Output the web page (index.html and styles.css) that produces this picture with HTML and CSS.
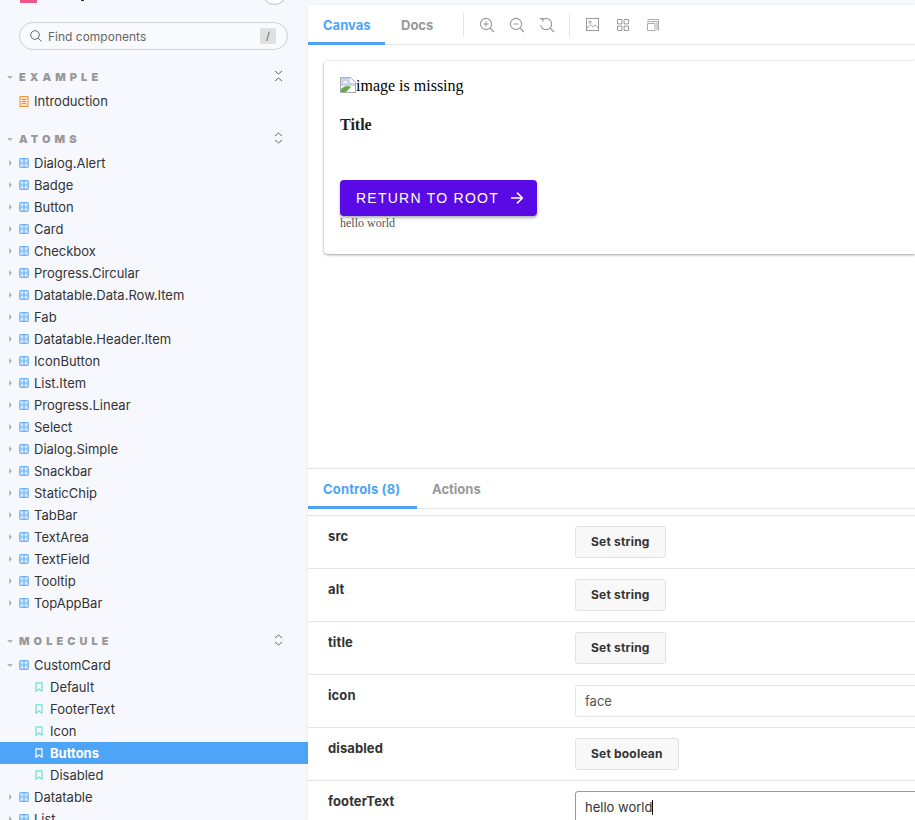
FILE: index.html
```html
<!DOCTYPE html>
<html lang="en">
<head>
<meta charset="utf-8">
<title>Storybook</title>
<link rel="stylesheet" href="styles.css">
</head>
<body>
<svg class="defs" width="0" height="0" aria-hidden="true">
  <symbol id="comp" viewBox="0 0 10 10"><rect x=".7" y=".7" width="8.6" height="8.6" rx="1.4" fill="#cfe5fd" stroke="#6db3f7" stroke-width="1.2"/><path d="M5 1v8M1 5h8" stroke="#6db3f7" stroke-width="1.1"/></symbol>
  <symbol id="story" viewBox="0 0 10 10"><path d="M2 .8h6v8.4L5 7 2 9.2z" fill="none" stroke="currentColor" stroke-width="1.2"/></symbol>
</svg>
<div class="app">
  <aside class="sidebar">
    <div class="brand">
      <span class="logo"></span>
      <span class="brand-mark"></span>
      <span class="menu-btn"></span>
    </div>
    <div class="search">
      <svg class="search-icon" width="12" height="12" viewBox="0 0 12 12"><circle cx="5" cy="5" r="4.3" fill="none" stroke="#666" stroke-width="1"/><path d="M8.2 8.2l3.4 3.4" stroke="#666" stroke-width="1"/></svg>
      <span class="search-text">Find components</span>
      <span class="kbd">/</span>
    </div>

    <div class="group-head"><span class="caret-down"></span><span class="group-title">EXAMPLE</span>
      <svg class="toggle" width="9" height="12" viewBox="0 0 9 12"><path d="M1 1l3.5 3L8 1M1 11l3.5-3L8 11" fill="none" stroke="#666" stroke-width="1"/></svg></div>
    <div class="item"><span class="caret-space"></span>
      <svg class="icon" width="10" height="11" viewBox="0 0 10 11"><rect x="1" y=".6" width="8" height="9.8" fill="#fde6cf" stroke="#f28a2e" stroke-width="1"/><path d="M3 3.5h4M3 5.5h4M3 7.5h4" stroke="#f28a2e" stroke-width="1"/></svg>
      <span>Introduction</span></div>

    <div class="group-head"><span class="caret-down"></span><span class="group-title">ATOMS</span>
      <svg class="toggle" width="9" height="12" viewBox="0 0 9 12"><path d="M1 4l3.5-3L8 4M1 8l3.5 3L8 8" fill="none" stroke="#666" stroke-width="1"/></svg></div>
    <div class="item"><span class="caret-right"></span><svg class="icon" width="10" height="10"><use href="#comp"/></svg><span>Dialog.Alert</span></div>
    <div class="item"><span class="caret-right"></span><svg class="icon" width="10" height="10"><use href="#comp"/></svg><span>Badge</span></div>
    <div class="item"><span class="caret-right"></span><svg class="icon" width="10" height="10"><use href="#comp"/></svg><span>Button</span></div>
    <div class="item"><span class="caret-right"></span><svg class="icon" width="10" height="10"><use href="#comp"/></svg><span>Card</span></div>
    <div class="item"><span class="caret-right"></span><svg class="icon" width="10" height="10"><use href="#comp"/></svg><span>Checkbox</span></div>
    <div class="item"><span class="caret-right"></span><svg class="icon" width="10" height="10"><use href="#comp"/></svg><span>Progress.Circular</span></div>
    <div class="item"><span class="caret-right"></span><svg class="icon" width="10" height="10"><use href="#comp"/></svg><span>Datatable.Data.Row.Item</span></div>
    <div class="item"><span class="caret-right"></span><svg class="icon" width="10" height="10"><use href="#comp"/></svg><span>Fab</span></div>
    <div class="item"><span class="caret-right"></span><svg class="icon" width="10" height="10"><use href="#comp"/></svg><span>Datatable.Header.Item</span></div>
    <div class="item"><span class="caret-right"></span><svg class="icon" width="10" height="10"><use href="#comp"/></svg><span>IconButton</span></div>
    <div class="item"><span class="caret-right"></span><svg class="icon" width="10" height="10"><use href="#comp"/></svg><span>List.Item</span></div>
    <div class="item"><span class="caret-right"></span><svg class="icon" width="10" height="10"><use href="#comp"/></svg><span>Progress.Linear</span></div>
    <div class="item"><span class="caret-right"></span><svg class="icon" width="10" height="10"><use href="#comp"/></svg><span>Select</span></div>
    <div class="item"><span class="caret-right"></span><svg class="icon" width="10" height="10"><use href="#comp"/></svg><span>Dialog.Simple</span></div>
    <div class="item"><span class="caret-right"></span><svg class="icon" width="10" height="10"><use href="#comp"/></svg><span>Snackbar</span></div>
    <div class="item"><span class="caret-right"></span><svg class="icon" width="10" height="10"><use href="#comp"/></svg><span>StaticChip</span></div>
    <div class="item"><span class="caret-right"></span><svg class="icon" width="10" height="10"><use href="#comp"/></svg><span>TabBar</span></div>
    <div class="item"><span class="caret-right"></span><svg class="icon" width="10" height="10"><use href="#comp"/></svg><span>TextArea</span></div>
    <div class="item"><span class="caret-right"></span><svg class="icon" width="10" height="10"><use href="#comp"/></svg><span>TextField</span></div>
    <div class="item"><span class="caret-right"></span><svg class="icon" width="10" height="10"><use href="#comp"/></svg><span>Tooltip</span></div>
    <div class="item"><span class="caret-right"></span><svg class="icon" width="10" height="10"><use href="#comp"/></svg><span>TopAppBar</span></div>

    <div class="group-head"><span class="caret-down"></span><span class="group-title">MOLECULE</span>
      <svg class="toggle" width="9" height="12" viewBox="0 0 9 12"><path d="M1 4l3.5-3L8 4M1 8l3.5 3L8 8" fill="none" stroke="#666" stroke-width="1"/></svg></div>
    <div class="item"><span class="caret-down"></span><svg class="icon" width="10" height="10"><use href="#comp"/></svg><span>CustomCard</span></div>
    <div class="item story"><svg class="icon" width="10" height="10"><use href="#story"/></svg><span>Default</span></div>
    <div class="item story"><svg class="icon" width="10" height="10"><use href="#story"/></svg><span>FooterText</span></div>
    <div class="item story"><svg class="icon" width="10" height="10"><use href="#story"/></svg><span>Icon</span></div>
    <div class="item story selected"><svg class="icon" width="10" height="10"><use href="#story"/></svg><span>Buttons</span></div>
    <div class="item story"><svg class="icon" width="10" height="10"><use href="#story"/></svg><span>Disabled</span></div>
    <div class="item"><span class="caret-right"></span><svg class="icon" width="10" height="10"><use href="#comp"/></svg><span>Datatable</span></div>
    <div class="item"><span class="caret-right"></span><svg class="icon" width="10" height="10"><use href="#comp"/></svg><span>List</span></div>
  </aside>

  <main class="main">
    <nav class="toolbar">
      <span class="tab active tab-canvas">Canvas</span>
      <span class="tab tab-docs">Docs</span>
      <span class="sep"></span>
      <span class="tools">
        <svg width="16" height="16" viewBox="0 0 16 16"><circle cx="7" cy="7" r="5.6" fill="none" stroke="#999" stroke-width="1.1"/><path d="M11 11l4 4M4.5 7h5M7 4.5v5" stroke="#999" stroke-width="1.1"/></svg>
        <svg width="16" height="16" viewBox="0 0 16 16"><circle cx="7" cy="7" r="5.6" fill="none" stroke="#999" stroke-width="1.1"/><path d="M11 11l4 4M4.5 7h5" stroke="#999" stroke-width="1.1"/></svg>
        <svg width="16" height="16" viewBox="0 0 16 16"><path d="M3.2 3A5.6 5.6 0 1 1 1.6 8" fill="none" stroke="#999" stroke-width="1.1"/><path d="M11 11l4 4M.8 1.6h3v3" fill="none" stroke="#999" stroke-width="1.1"/></svg>
      </span>
      <span class="sep"></span>
      <span class="tools tools-b">
        <svg width="13" height="13" viewBox="0 0 13 13"><rect x=".5" y=".5" width="12" height="12" fill="none" stroke="#999"/><circle cx="4" cy="4" r="1.2" fill="none" stroke="#999" stroke-width=".9"/><path d="M1 10l3.5-3.2 2.5 2 2-2 3 3" fill="none" stroke="#999" stroke-width=".9"/></svg>
        <svg width="12" height="12" viewBox="0 0 12 12"><path d="M.5.5h4.4v4.4H.5zM7.1.5h4.4v4.4H7.1zM.5 7.1h4.4v4.4H.5zM7.1 7.1h4.4v4.4H7.1z" fill="none" stroke="#999"/></svg>
        <svg width="12" height="12" viewBox="0 0 12 12"><path d="M.5 4.5h7.5v7H.5zM.5 2.5h9.5v9M.5.5h11v11" fill="none" stroke="#aaa"/></svg>
      </span>
    </nav>

    <section class="preview">
      <article class="card">
        <div class="broken">
          <svg width="16" height="16" viewBox="0 0 16 16"><path d="M.5.5h10l5 5v10H.5z" fill="#fff" stroke="#aaa"/><path d="M1 1h9v5l5 0v3H1z" fill="#c5d6ec"/><path d="M1 15v-3c3-3 7-4 10-2l-5 5z" fill="#6aa84f"/><path d="M3 6c1-2.500 4-2.500 5 0z" fill="#fff"/></svg><span>image is missing</span>
        </div>
        <h3 class="card-title">Title</h3>
        <span class="cta">RETURN TO ROOT
          <svg width="14" height="14" viewBox="0 0 14 14"><path d="M1 7h11.200M7 1.600L12.400 7 7 12.400" fill="none" stroke="#fff" stroke-width="1.500"/></svg>
        </span>
        <p class="footer-text">hello world</p>
      </article>
    </section>

    <section class="panel">
      <div class="panel-tabs">
        <span class="tab active tab-controls">Controls (8)</span>
        <span class="tab tab-actions">Actions</span>
      </div>
      <div class="controls">
        <div class="row"><span class="label">src</span><span class="set-btn">Set string</span></div>
        <div class="row"><span class="label">alt</span><span class="set-btn">Set string</span></div>
        <div class="row"><span class="label">title</span><span class="set-btn">Set string</span></div>
        <div class="row"><span class="label">icon</span><span class="field">face</span></div>
        <div class="row"><span class="label">disabled</span><span class="set-btn">Set boolean</span></div>
        <div class="row"><span class="label">footerText</span><span class="field focused"><span>hello world</span><span class="caret-line"></span></span></div>
      </div>
    </section>
  </main>
</div>
</body>
</html>
```
FILE: styles.css
```css
* { box-sizing: border-box; }
html, body { margin: 0; height: 820px; overflow: hidden; }
body { background: #f6f9fc; font-family: Inter, "Liberation Sans", sans-serif; color: #333; }
.defs { position: absolute; }
.app { display: flex; height: 820px; overflow: hidden; }

.sidebar { width: 308px; flex: none; background: #f7f8fe; height: 820px; overflow: hidden; font-size: 13px; }
.brand { height: 22px; position: relative; overflow: hidden; }
.logo { position: absolute; left: 20px; top: 0; width: 17px; height: 3px; background: #f0558a; }
.brand-mark { position: absolute; left: 81px; top: 0; width: 3px; height: 1px; background: #333; }
.menu-btn { position: absolute; left: 262px; top: -20px; width: 25px; height: 25px; border: 1px solid #bdbdbd; border-radius: 50%; background: #fff; }

.search { margin: 0 20px 0 19px; width: 269px; height: 28px; border: 1px solid #cfd0d3; border-radius: 14px; background: #f9fafe; display: flex; align-items: center; padding: 0 11px 0 10px; color: #666; }
.search-text { margin-left: 6px; flex: 1; font-size: 12px; }
.kbd { width: 16px; height: 16px; background: #dfe0e2; border-radius: 2px; font-size: 11px; display: flex; justify-content: center; align-items: center; }

.group-head { height: 22px; margin: 16px 0 2px; display: flex; align-items: center; padding-left: 7px; position: relative; }
.group-title { font-size: 11px; font-weight: 900; letter-spacing: 4.05px; color: #999; margin-left: 6px; }
.toggle { position: absolute; left: 274px; top: 4px; }
.caret-down { width: 0; height: 0; flex: none; border-left: 3px solid transparent; border-right: 3px solid transparent; border-top: 3px solid #b5b5b5; }
.caret-right { width: 0; height: 0; flex: none; border-top: 3px solid transparent; border-bottom: 3px solid transparent; border-left: 3px solid #b5b5b5; }
.caret-space { width: 6px; flex: none; }
.item { height: 22px; display: flex; align-items: center; padding-left: 7px; color: #333; white-space: nowrap; }
.item .caret-right { margin-right: 7px; margin-left: 2px; }
.item .caret-down { margin-right: 6px; }
.item .icon { flex: none; margin-right: 5px; }
.item .caret-space { margin-right: 6px; }
.story { padding-left: 34px; }
.story .icon { color: #6fe0d2; margin-right: 6px; }
.selected { background: #4ea4f7; color: #fff; font-weight: 700; }
.selected .icon { color: #fff; }

.main { flex: 1; min-width: 0; margin-top: 5px; background: #fff; border-radius: 4px 0 0 0; display: flex; flex-direction: column; height: 815px; overflow: hidden; box-shadow: 0 0 4px rgba(0,0,0,.05); }
.toolbar { height: 40px; flex: none; display: flex; align-items: center; border-bottom: 1px solid #e6e6e6; }
.tab { font-size: 13px; font-weight: 700; color: #999; height: 100%; display: flex; align-items: center; padding: 2px 15px 0; border-bottom: 3px solid transparent; margin-bottom: -1px; }
.tab.active { color: #4ea4f7; border-bottom-color: #4ea4f7; }
.tab-canvas { width: 77px; }
.tab-docs { width: 78px; padding-left: 16px; }
.sep { width: 1px; height: 24px; background: #e4e4e4; flex: none; }
.tools { display: flex; gap: 14px; padding: 0 14px 0 15px; align-items: center; }
.tools-b { gap: 18px; padding: 0 17px 0 16px; }

.preview { height: 423px; flex: none; padding: 16px 0 0 16px; background: #fff; }
.card { height: 193px; border-radius: 4px 0 0 4px; background: #fff; box-shadow: 0 1px 3px rgba(0,0,0,.35), 0 0 3px rgba(0,0,0,.06); padding: 16px; font-family: "Liberation Serif", serif; color: #000; overflow: hidden; }
.broken { display: flex; align-items: flex-start; height: 18px; font-size: 16px; line-height: 18px; }
.card-title { margin: 19px 0 0; height: 21px; font-size: 16px; line-height: 21px; font-weight: 700; color: #222; }
.cta { margin-top: 45px; width: 197px; height: 36px; background: #5a0ae4; border-radius: 4px; color: #fff; display: flex; align-items: center; gap: 11px; padding-left: 16px; font-family: "Liberation Sans", sans-serif; font-size: 14px; letter-spacing: 1.25px; box-shadow: 0 2px 3px rgba(0,0,0,.3); }
.footer-text { margin: 0; font-size: 12px; line-height: 14px; color: #555; }

.panel { flex: 1; border-top: 1px solid #e4e4e4; min-height: 0; }
.panel-tabs { height: 40px; display: flex; align-items: center; border-bottom: 1px solid #e6e6e6; }
.tab-controls { width: 109px; letter-spacing: .15px; }
.tab-actions { padding-left: 15px; }
.controls { margin-top: 6px; border-top: 1px solid #e4e4e4; }
.row { height: 53px; border-bottom: 1px solid #e4e4e4; display: flex; align-items: flex-start; padding: 10px 0 0 20px; }
.label { width: 247px; flex: none; font-size: 13px; font-weight: 700; line-height: 21px; color: #333; letter-spacing: .1px; }
.set-btn { height: 32px; padding: 0 15px 2px; border: 1px solid #e2e2e2; border-radius: 3px; background: #f8f8f8; font-size: 12px; font-weight: 700; display: flex; align-items: center; letter-spacing: .2px; color: #333; }
.field { width: 400px; height: 32px; flex: none; border: 1px solid #e4e4e4; border-radius: 3px; padding: 0 9px; font-size: 13px; color: #555; display: flex; align-items: center; }
.field.focused { border-color: #5fa3ee; color: #333; }
.caret-line { width: 1px; height: 15px; background: #111; }
```
